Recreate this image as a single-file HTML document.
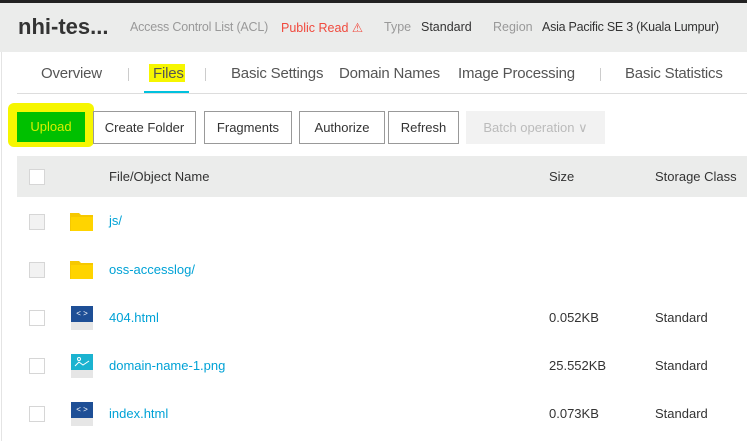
<!DOCTYPE html>
<html><head><style>
body{margin:0;width:747px;height:441px;overflow:hidden;background:#fff;font-family:"Liberation Sans",sans-serif;position:relative}
.a{position:absolute;white-space:nowrap}
.h{position:absolute;white-space:nowrap;top:20px;font-size:12.5px}
.btn{position:absolute;top:111px;height:31px;border:1px solid #999;background:#fff;font-size:13px;color:#333;text-align:center;line-height:31px;box-sizing:content-box}
.cb{position:absolute;left:29px;width:14px;height:14px;border:1px solid #d6d6d6;background:#fff}
.nm{position:absolute;left:109px;font-size:13px;color:#00a2d6}
.tx{position:absolute;font-size:13px;color:#333}
.tab{position:absolute;white-space:nowrap;top:65px;font-size:15px;color:#555;letter-spacing:-0.2px}
</style></head><body>
<div class="a" style="left:0;top:0;width:747px;height:3px;background:#222"></div>
<div class="a" style="left:0;top:3px;width:747px;height:49px;background:#ebeceb"></div>
<div class="a" style="left:18px;top:14px;font-size:22px;font-weight:bold;color:#333">nhi-tes...</div>
<div class="h" style="left:130px;color:#999;letter-spacing:-0.2px">Access Control List (ACL)</div>
<div class="h" style="left:281px;color:#f04a3e">Public Read &#9888;</div>
<div class="h" style="left:384px;color:#999">Type</div>
<div class="h" style="left:421px;color:#333">Standard</div>
<div class="h" style="left:493px;color:#999">Region</div>
<div class="h" style="left:542px;color:#333;letter-spacing:-0.25px">Asia Pacific SE 3 (Kuala Lumpur)</div>
<div class="a" style="left:1px;top:52px;width:1px;height:389px;background:#e4e4e4"></div>
<div class="tab" style="left:41px">Overview</div>
<div class="a" style="left:128px;top:68px;width:1px;height:13px;background:#ccc"></div>
<div class="a" style="left:149px;top:64px;width:36px;height:18px;background:#f6f600"></div>
<div class="tab" style="left:153px">Files</div>
<div class="a" style="left:205px;top:68px;width:1px;height:13px;background:#ccc"></div>
<div class="tab" style="left:231px">Basic Settings</div>
<div class="tab" style="left:339px">Domain Names</div>
<div class="tab" style="left:458px">Image Processing</div>
<div class="a" style="left:600px;top:68px;width:1px;height:13px;background:#ccc"></div>
<div class="tab" style="left:625px">Basic Statistics</div>
<div class="a" style="left:17px;top:93px;width:730px;height:1px;background:#ddd"></div>
<div class="a" style="left:144px;top:91px;width:45px;height:2px;background:#00c1de"></div>
<div class="a" style="left:8px;top:103px;width:86px;height:44px;background:#f6f600;border-radius:6px"></div>
<div class="a" style="left:17px;top:112px;width:68px;height:30px;background:#00c000;color:#d8ee00;font-size:13px;text-align:center;line-height:30px">Upload</div>
<div class="btn" style="left:93px;width:101px">Create Folder</div>
<div class="btn" style="left:204px;width:86px">Fragments</div>
<div class="btn" style="left:299px;width:84px">Authorize</div>
<div class="btn" style="left:388px;width:69px">Refresh</div>
<div class="btn" style="left:466px;width:137px;border-color:#f2f2f2;background:#f2f2f2;color:#bbb">Batch operation &#8744;</div>
<div class="a" style="left:17px;top:156px;width:730px;height:41px;background:#ebeceb"></div>
<div class="cb" style="top:169px"></div>
<div class="tx" style="left:109px;top:169px">File/Object Name</div>
<div class="tx" style="left:549px;top:169px">Size</div>
<div class="tx" style="left:655px;top:169px">Storage Class</div>

<div class="cb" style="top:214px;background:#f2f2f2"></div>
<svg class="a" style="left:70px;top:210px" width="24" height="22"><path d="M0 3h9l2 2h12v16H0z" fill="#f6c800"/><path d="M1 7h22v14H1z" fill="#ffd400"/></svg>
<div class="nm" style="top:213px">js/</div>
<div class="cb" style="top:262px;background:#f2f2f2"></div>
<svg class="a" style="left:70px;top:258px" width="24" height="22"><path d="M0 3h9l2 2h12v16H0z" fill="#f6c800"/><path d="M1 7h22v14H1z" fill="#ffd400"/></svg>
<div class="nm" style="top:262px">oss-accesslog/</div>

<div class="cb" style="top:310px"></div>
<svg class="a" style="left:71px;top:306px" width="22" height="24"><rect width="22" height="24" fill="#e6e6e6"/><rect width="22" height="16" fill="#1e4f96"/><text x="11" y="10" font-size="8" fill="#fff" text-anchor="middle" font-family="Liberation Sans">&lt; &gt;</text></svg>
<div class="nm" style="top:310px">404.html</div>
<div class="tx" style="left:549px;top:310px">0.052KB</div>
<div class="tx" style="left:655px;top:310px">Standard</div>

<div class="cb" style="top:358px"></div>
<svg class="a" style="left:71px;top:354px" width="22" height="24"><rect width="22" height="24" fill="#e6e6e6"/><rect width="22" height="16" fill="#1bb3d0"/><path d="M4 12l4-4 4 3 6-4" stroke="#fff" fill="none"/><circle cx="8" cy="5" r="1.5" fill="none" stroke="#fff"/></svg>
<div class="nm" style="top:358px">domain-name-1.png</div>
<div class="tx" style="left:549px;top:358px">25.552KB</div>
<div class="tx" style="left:655px;top:358px">Standard</div>

<div class="cb" style="top:406px"></div>
<svg class="a" style="left:71px;top:402px" width="22" height="24"><rect width="22" height="24" fill="#e6e6e6"/><rect width="22" height="16" fill="#1e4f96"/><text x="11" y="10" font-size="8" fill="#fff" text-anchor="middle" font-family="Liberation Sans">&lt; &gt;</text></svg>
<div class="nm" style="top:406px">index.html</div>
<div class="tx" style="left:549px;top:406px">0.073KB</div>
<div class="tx" style="left:655px;top:406px">Standard</div>
</body></html>
